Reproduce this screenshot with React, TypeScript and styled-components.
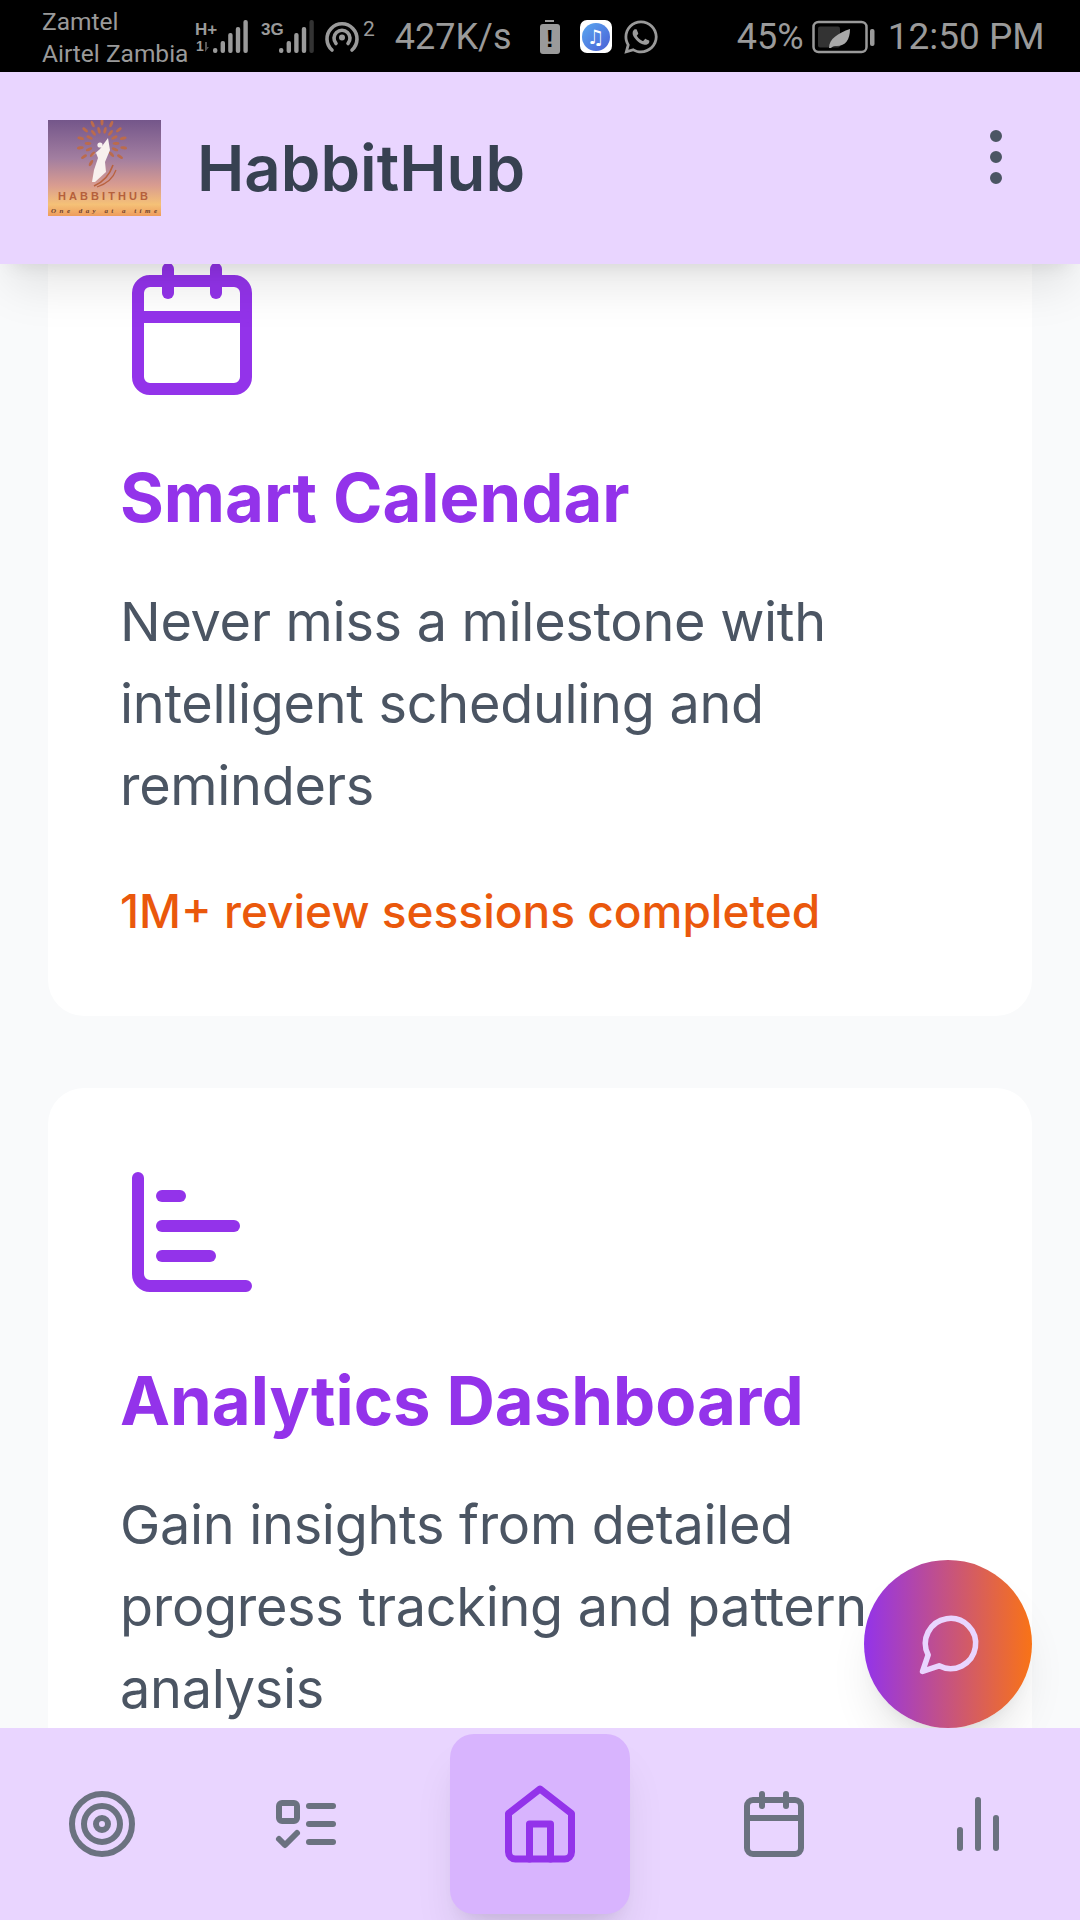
import React from 'react';
import styled, { createGlobalStyle } from 'styled-components';
import { FaWhatsapp } from 'react-icons/fa';

type Feature = {
  title: string;
  description: string;
  stat?: string;
  icon: React.ReactNode;
};

const CalendarGlyph = () => (
  <>
    <path d="M8 2v4" />
    <path d="M16 2v4" />
    <rect x="3" y="4" width="18" height="18" rx="2" />
    <path d="M3 10h18" />
  </>
);

const Icon = ({ size, children }: { size: number; children: React.ReactNode }) => (
  <svg
    width={size}
    height={size}
    viewBox="0 0 24 24"
    fill="none"
    stroke="currentColor"
    strokeWidth="2"
    strokeLinecap="round"
    strokeLinejoin="round">
    {children}
  </svg>
);

const features: Feature[] = [
  {
    title: 'Smart Calendar',
    description: 'Never miss a milestone with intelligent scheduling and reminders',
    stat: '1M+ review sessions completed',
    icon: <CalendarGlyph />,
  },
  {
    title: 'Analytics Dashboard',
    description: 'Gain insights from detailed progress tracking and pattern analysis',
    icon: (
      <>
        <path d="M3 3v16a2 2 0 0 0 2 2h16" />
        <path d="M7 16h8" />
        <path d="M7 11h12" />
        <path d="M7 6h3" />
      </>
    ),
  },
];

const leaves = Array.from({ length: 24 }, (_, i) => {
  const angle = (i / 24) * 300 - 150;
  const radius = i % 2 === 0 ? 22 : 14;
  return { angle, radius };
});

const Logo = () => (
  <svg width="113" height="96" viewBox="0 0 113 96">
    <defs>
      <linearGradient id="logoSky" x1="0" y1="0" x2="0" y2="1">
        <stop offset="0" stopColor="#74568a" />
        <stop offset="0.4" stopColor="#a27ea0" />
        <stop offset="0.68" stopColor="#d99c90" />
        <stop offset="0.88" stopColor="#f5c177" />
        <stop offset="1" stopColor="#ee9c5c" />
      </linearGradient>
    </defs>
    <rect width="113" height="96" fill="url(#logoSky)" />
    {leaves.map(({ angle, radius }) => (
      <ellipse
        key={angle}
        cx="54"
        cy={24 - radius}
        rx="1.5"
        ry="3.4"
        fill="#bb6b4c"
        transform={`rotate(${angle} 54 24)`}
      />
    ))}
    <path d="M60 18 L62 30 L57 42 L58 52 L47 62 L44 62 L46 50 L50 38 L48 33 L43 37 L52 29 Z" fill="#f8f1ee" />
    <circle cx="52" cy="25" r="2.6" fill="#f8f1ee" />
    <path d="M46 66 Q60 60 65 45" fill="none" stroke="#b9623f" strokeWidth="1.6" />
    <path d="M49 67 Q64 62 68 50" fill="none" stroke="#b9623f" strokeWidth="1.2" />
    <text x="10" y="80" textLength="90" lengthAdjust="spacing" fontFamily="Liberation Sans" fontSize="11" fontWeight="700" fill="#b5603c">
      HABBITHUB
    </text>
    <text x="3" y="93" textLength="106" lengthAdjust="spacing" fontFamily="Liberation Serif" fontStyle="italic" fontSize="7" fontWeight="700" fill="#70402c">
      One day at a time
    </text>
  </svg>
);

const SignalBars = ({ heights, dim }: { heights: number[]; dim?: boolean }) => (
  <>
    {heights.map((h, i) => (
      <rect
        key={i}
        x={18 + i * 7.6}
        y={33 - h}
        width="4.4"
        height={h}
        rx="2"
        fill={dim && i === heights.length - 1 ? '#333' : '#9a9a9a'}
      />
    ))}
  </>
);

const App = () => {
  return (
    <>
      <GlobalStyle />
      <Screen>
        <StatusBar>
          <Carriers>
            <span>Zamtel</span>
            <span>Airtel Zambia</span>
          </Carriers>
          <SignalOne width="53" height="34" viewBox="0 0 53 34">
            <SignalLabel x="0" y="15">H+</SignalLabel>
            <SignalLabel x="1" y="30.5" $small>1</SignalLabel>
            <path d="M10 22v10l4-5h-2v-5z" fill="#555" />
            <SignalBars heights={[5, 12, 20, 26, 33]} />
          </SignalOne>
          <SignalTwo width="53" height="34" viewBox="0 0 53 34">
            <SignalLabel x="0" y="15">3G</SignalLabel>
            <SignalBars heights={[5, 12, 20, 26, 33]} dim />
          </SignalTwo>
          <Hotspot width="36" height="32" viewBox="0 0 36 32">
            <path d="M8 29a15 15 0 1 1 20 0" />
            <path d="M12 22.5a8 8 0 1 1 12 0" />
            <circle cx="18" cy="16.5" r="3" fill="#9a9a9a" stroke="none" />
          </Hotspot>
          <HotspotCount>2</HotspotCount>
          <Speed>427K/s</Speed>
          <BatteryAlert>
            <BatteryNub />
            <BatteryBody>!</BatteryBody>
          </BatteryAlert>
          <MusicBadge>
            <MusicDisc>♫</MusicDisc>
          </MusicBadge>
          <WhatsappIcon>
            <FaWhatsapp size={38} />
          </WhatsappIcon>
          <Percent>45%</Percent>
          <Battery width="64" height="34" viewBox="0 0 64 34">
            <rect x="1.5" y="2" width="53" height="30" rx="5" fill="none" stroke="#9a9a9a" strokeWidth="2.5" />
            <rect x="6" y="6.5" width="22" height="21" rx="2" fill="#333" />
            <path d="M17 28c0-9 9-15 21-19 0 11-5 18-15 17-2 0-3 1-4 2z" fill="#a8a8a8" />
            <rect x="58" y="9" width="4.5" height="17" rx="2" fill="#9a9a9a" />
          </Battery>
          <Clock>12:50 PM</Clock>
        </StatusBar>

        <Header>
          <Brand>
            <Logo />
            <BrandName>HabbitHub</BrandName>
          </Brand>
          <MenuButton>
            <Icon size={72}>
              <circle cx="12" cy="5" r="1" />
              <circle cx="12" cy="12" r="1" />
              <circle cx="12" cy="19" r="1" />
            </Icon>
          </MenuButton>
        </Header>

        <Content>
          <CardList>
            {features.map((feature) => (
              <Card key={feature.title}>
                <CardIcon>
                  <Icon size={144}>{feature.icon}</Icon>
                </CardIcon>
                <CardTitle>{feature.title}</CardTitle>
                <CardText>{feature.description}</CardText>
                {feature.stat && <CardStat>{feature.stat}</CardStat>}
              </Card>
            ))}
          </CardList>
          <ChatButton>
            <Icon size={67}>
              <path d="M7.9 20A9 9 0 1 0 4 16.1L2 22Z" />
            </Icon>
          </ChatButton>
        </Content>

        <BottomNav>
          <NavItem>
            <Icon size={72}>
              <circle cx="12" cy="12" r="10" />
              <circle cx="12" cy="12" r="6" />
              <circle cx="12" cy="12" r="2" />
            </Icon>
          </NavItem>
          <NavItem>
            <Icon size={72}>
              <rect x="3" y="5" width="6" height="6" rx="1" />
              <path d="m3 17 2 2 4-4" />
              <path d="M13 6h8" />
              <path d="M13 12h8" />
              <path d="M13 18h8" />
            </Icon>
          </NavItem>
          <NavItem $active>
            <Icon size={84}>
              <path d="m3 9 9-7 9 7v11a2 2 0 0 1-2 2H5a2 2 0 0 1-2-2z" />
              <path d="M9 22V12h6v10" />
            </Icon>
          </NavItem>
          <NavItem>
            <Icon size={72}>
              <CalendarGlyph />
            </Icon>
          </NavItem>
          <NavItem>
            <Icon size={72}>
              <path d="M18 20V10" />
              <path d="M12 20V4" />
              <path d="M6 20v-6" />
            </Icon>
          </NavItem>
        </BottomNav>
      </Screen>
    </>
  );
};

export default App;

const GlobalStyle = createGlobalStyle`
  html,
  body {
    margin: 0;
    padding: 0;
  }

  body {
    font-family: Inter, "Noto Sans", sans-serif;
  }

  * {
    box-sizing: border-box;
  }
`;

const Screen = styled.div`
  display: flex;
  flex-direction: column;
  width: 1080px;
  height: 1920px;
  overflow: hidden;
  background: #f9fafb;
`;

const StatusBar = styled.div`
  display: flex;
  align-items: center;
  flex: none;
  height: 72px;
  padding: 1px 0 0 42px;
  background: #000;
  color: #9a9a9a;
  font-family: Roboto, sans-serif;
`;

const Carriers = styled.div`
  display: flex;
  flex-direction: column;
  flex: none;
  width: 153px;
  padding-top: 3px;
  font-size: 24.5px;
  line-height: 32px;
  white-space: nowrap;
`;

const SignalOne = styled.svg`
  flex: none;
`;

const SignalTwo = styled.svg`
  flex: none;
  margin-left: 13px;
`;

const SignalLabel = styled.text<{ $small?: boolean }>`
  font-family: 'Liberation Sans', sans-serif;
  font-size: ${({ $small }) => ($small ? '14px' : '17px')};
  font-weight: 700;
  fill: #9a9a9a;
`;

const Hotspot = styled.svg`
  flex: none;
  margin-left: 10px;
  fill: none;
  stroke: #9a9a9a;
  stroke-width: 3.6;
  stroke-linecap: round;
`;

const HotspotCount = styled.span`
  align-self: flex-start;
  margin: 16px 0 0 3px;
  font-size: 21px;
  line-height: 24px;
`;

const Speed = styled.span`
  margin-left: 20px;
  width: 145px;
  font-size: 36px;
`;

const BatteryAlert = styled.div`
  display: flex;
  flex-direction: column;
  align-items: center;
  width: 20px;
`;

const BatteryNub = styled.div`
  width: 9px;
  height: 2px;
  background: #9a9a9a;
`;

const BatteryBody = styled.div`
  width: 20px;
  height: 30px;
  margin-top: 2px;
  border-radius: 3px;
  background: #9a9a9a;
  color: #000;
  font-family: 'Liberation Sans', sans-serif;
  font-size: 24px;
  font-weight: 700;
  line-height: 30px;
  text-align: center;
`;

const MusicBadge = styled.div`
  display: flex;
  align-items: center;
  justify-content: center;
  width: 32px;
  height: 33px;
  margin-left: 20px;
  border-radius: 7px;
  background: #fff;
`;

const MusicDisc = styled.div`
  width: 28px;
  height: 28px;
  border-radius: 50%;
  background: linear-gradient(135deg, #5aa8f0, #4a5fd6);
  color: #fff;
  font-family: 'DejaVu Sans', sans-serif;
  font-size: 20px;
  line-height: 28px;
  text-align: center;
`;

const WhatsappIcon = styled.div`
  display: flex;
  margin-left: 10px;
`;

const Percent = styled.span`
  margin-left: 77px;
  font-size: 36px;
`;

const Battery = styled.svg`
  flex: none;
  margin-left: 8px;
`;

const Clock = styled.span`
  margin-left: 12px;
  font-size: 37px;
  white-space: nowrap;
`;

const Header = styled.header`
  position: relative;
  z-index: 2;
  display: flex;
  align-items: center;
  justify-content: space-between;
  flex: none;
  height: 192px;
  padding: 0 48px;
  background: #e9d5ff;
  box-shadow: 0 30px 45px -9px rgba(0, 0, 0, 0.1), 0 12px 18px -12px rgba(0, 0, 0, 0.1);
`;

const Brand = styled.div`
  display: flex;
  align-items: center;
  gap: 36px;
`;

const BrandName = styled.h1`
  margin: 0;
  color: #374151;
  font-size: 63.5px;
  font-weight: 600;
  line-height: 80px;
`;

const MenuButton = styled.div`
  display: flex;
  margin-top: -22px;
  color: #4b5563;

  svg {
    fill: currentColor;
  }
`;

const Content = styled.main`
  position: relative;
  flex: 1;
  min-height: 0;
  overflow: hidden;
`;

const CardList = styled.div`
  display: flex;
  flex-direction: column;
  gap: 72px;
  margin-top: -79px;
  padding: 0 48px;
`;

const Card = styled.section`
  padding: 72px;
  border-radius: 36px;
  background: #fff;
`;

const CardIcon = styled.div`
  display: flex;
  color: #9333ea;
`;

const CardTitle = styled.h2`
  margin: 52px 0 38px;
  color: #9333ea;
  font-size: 67px;
  font-weight: 700;
  line-height: 90px;
`;

const CardText = styled.p`
  margin: 0;
  color: #4b5563;
  font-size: 54px;
  font-weight: 400;
  letter-spacing: -0.3px;
  line-height: 82px;
`;

const CardStat = styled.p`
  margin: 52px 0 0;
  color: #ea580c;
  font-size: 46px;
  font-weight: 500;
  line-height: 65px;
`;

const ChatButton = styled.div`
  position: absolute;
  right: 48px;
  bottom: 0;
  display: flex;
  align-items: center;
  justify-content: center;
  width: 168px;
  height: 168px;
  padding: 0 0 2px 4px;
  border-radius: 50%;
  background: linear-gradient(to right, #9333ea, #f97316);
  color: #e9d5ff;
  box-shadow: 0 30px 45px -9px rgba(0, 0, 0, 0.1), 0 12px 18px -12px rgba(0, 0, 0, 0.1);
`;

const BottomNav = styled.nav`
  position: relative;
  z-index: 1;
  display: flex;
  align-items: center;
  justify-content: space-around;
  flex: none;
  height: 192px;
  background: #e9d5ff;
`;

const NavItem = styled.div<{ $active?: boolean }>`
  display: flex;
  align-items: center;
  justify-content: center;
  width: ${({ $active }) => ($active ? '180px' : '120px')};
  height: 180px;
  border-radius: 24px;
  background: ${({ $active }) => ($active ? '#d8b4fe' : 'transparent')};
  color: ${({ $active }) => ($active ? '#9333ea' : '#6b7280')};
  box-shadow: ${({ $active }) =>
    $active ? '0 30px 45px -9px rgba(0, 0, 0, 0.1), 0 12px 18px -12px rgba(0, 0, 0, 0.1)' : 'none'};
`;
